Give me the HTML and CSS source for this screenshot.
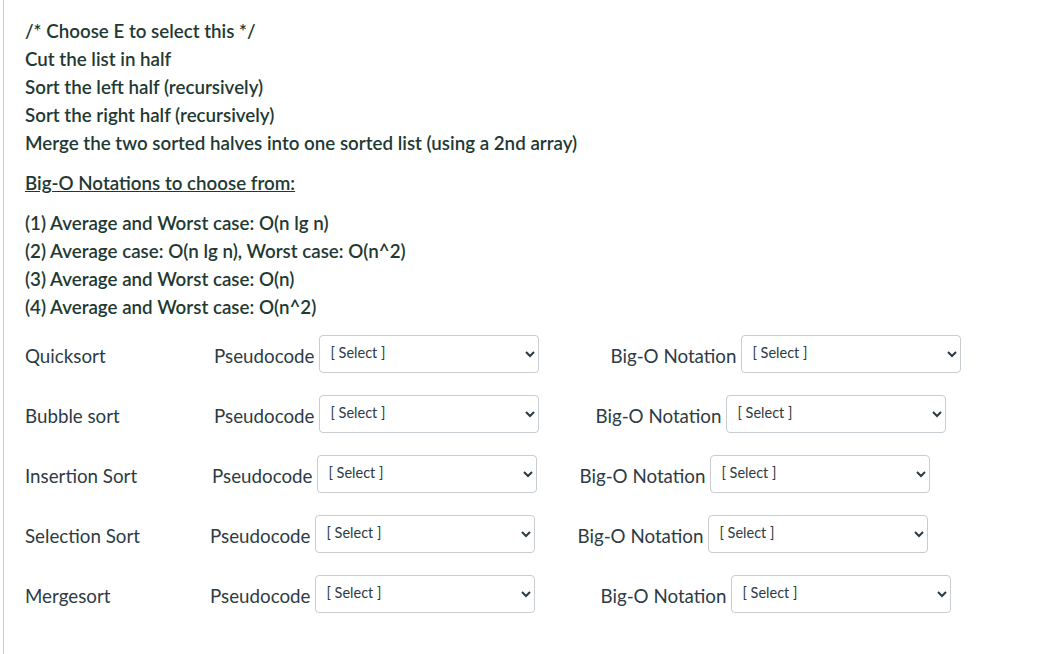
FILE: index.html
```html
<!DOCTYPE html>
<html lang="en">
<head>
    <meta charset="UTF-8">
    <meta name="viewport" content="width=device-width, initial-scale=1.0">
    <title>Sorting Algorithms - Matching</title>
    <link rel="stylesheet" href="styles.css">
</head>
<body>
    <div class="question">
        <p>/* Choose E to select this */<br>
        Cut the list in half<br>
        Sort the left half (recursively)<br>
        Sort the right half (recursively)<br>
        Merge the two sorted halves into one sorted list (using a 2nd array)</p>

        <p class="heading">Big-O Notations to choose from:</p>

        <p class="choices">(1) Average and Worst case: O(n lg n)<br>
        (2) Average case: O(n lg n), Worst case: O(n^2)<br>
        (3) Average and Worst case: O(n)<br>
        (4) Average and Worst case: O(n^2)</p>

        <div class="rows">
            <div class="row row-quick">
                <span class="name">Quicksort</span>
                <label class="lbl">Pseudocode</label>
                <select><option>[ Select ]</option><option>A</option><option>B</option><option>C</option><option>D</option><option>E</option></select>
                <label class="lbl lbl-big">Big-O Notation</label>
                <select><option>[ Select ]</option><option>(1)</option><option>(2)</option><option>(3)</option><option>(4)</option></select>
            </div>
            <div class="row row-bubble">
                <span class="name">Bubble sort</span>
                <label class="lbl">Pseudocode</label>
                <select><option>[ Select ]</option><option>A</option><option>B</option><option>C</option><option>D</option><option>E</option></select>
                <label class="lbl lbl-big">Big-O Notation</label>
                <select><option>[ Select ]</option><option>(1)</option><option>(2)</option><option>(3)</option><option>(4)</option></select>
            </div>
            <div class="row row-insertion">
                <span class="name">Insertion Sort</span>
                <label class="lbl">Pseudocode</label>
                <select><option>[ Select ]</option><option>A</option><option>B</option><option>C</option><option>D</option><option>E</option></select>
                <label class="lbl lbl-big">Big-O Notation</label>
                <select><option>[ Select ]</option><option>(1)</option><option>(2)</option><option>(3)</option><option>(4)</option></select>
            </div>
            <div class="row row-selection">
                <span class="name">Selection Sort</span>
                <label class="lbl">Pseudocode</label>
                <select><option>[ Select ]</option><option>A</option><option>B</option><option>C</option><option>D</option><option>E</option></select>
                <label class="lbl lbl-big">Big-O Notation</label>
                <select><option>[ Select ]</option><option>(1)</option><option>(2)</option><option>(3)</option><option>(4)</option></select>
            </div>
            <div class="row row-merge">
                <span class="name">Mergesort</span>
                <label class="lbl">Pseudocode</label>
                <select><option>[ Select ]</option><option>A</option><option>B</option><option>C</option><option>D</option><option>E</option></select>
                <label class="lbl lbl-big">Big-O Notation</label>
                <select><option>[ Select ]</option><option>(1)</option><option>(2)</option><option>(3)</option><option>(4)</option></select>
            </div>
        </div>
    </div>
</body>
</html>
```

FILE: styles.css
```css
body { margin: 0; font-family: Lato, "Noto Sans", sans-serif; color: #2d3b45; background: #fff; }
.question { margin-left: 3px; border-left: 1px solid #c7cdd1; min-height: 654px; padding: 17px 0 0 21px; box-sizing: border-box; font-size: 18.75px; line-height: 28px; }
.question p { margin: 0 0 12px; font-weight: 600; color: #1f3a34; }
.heading { text-decoration: underline; }
.question .choices { margin-bottom: 3px; }
.row { display: flex; align-items: center; padding: 11px 0; }
.name { width: var(--lead, 189px); flex: none; padding-top: 3px; }
.lbl { margin-right: 5px; padding-top: 3px; }
.lbl-big { margin-left: var(--mid, 72px); }
select { width: 220px; height: 38px; border: 1px solid #c7cdd1; border-radius: 4px; background: #fff; color: #2d3b45; font-family: Lato, sans-serif; font-size: 14.5px; padding: 0 8px 4px 6px; }
.row-quick { --lead: 189px; --mid: 71px; }
.row-bubble { --lead: 189px; --mid: 56px; }
.row-insertion { --lead: 187px; --mid: 42px; }
.row-selection { --lead: 185px; --mid: 42px; }
.row-merge { --lead: 185px; --mid: 65px; }
```
